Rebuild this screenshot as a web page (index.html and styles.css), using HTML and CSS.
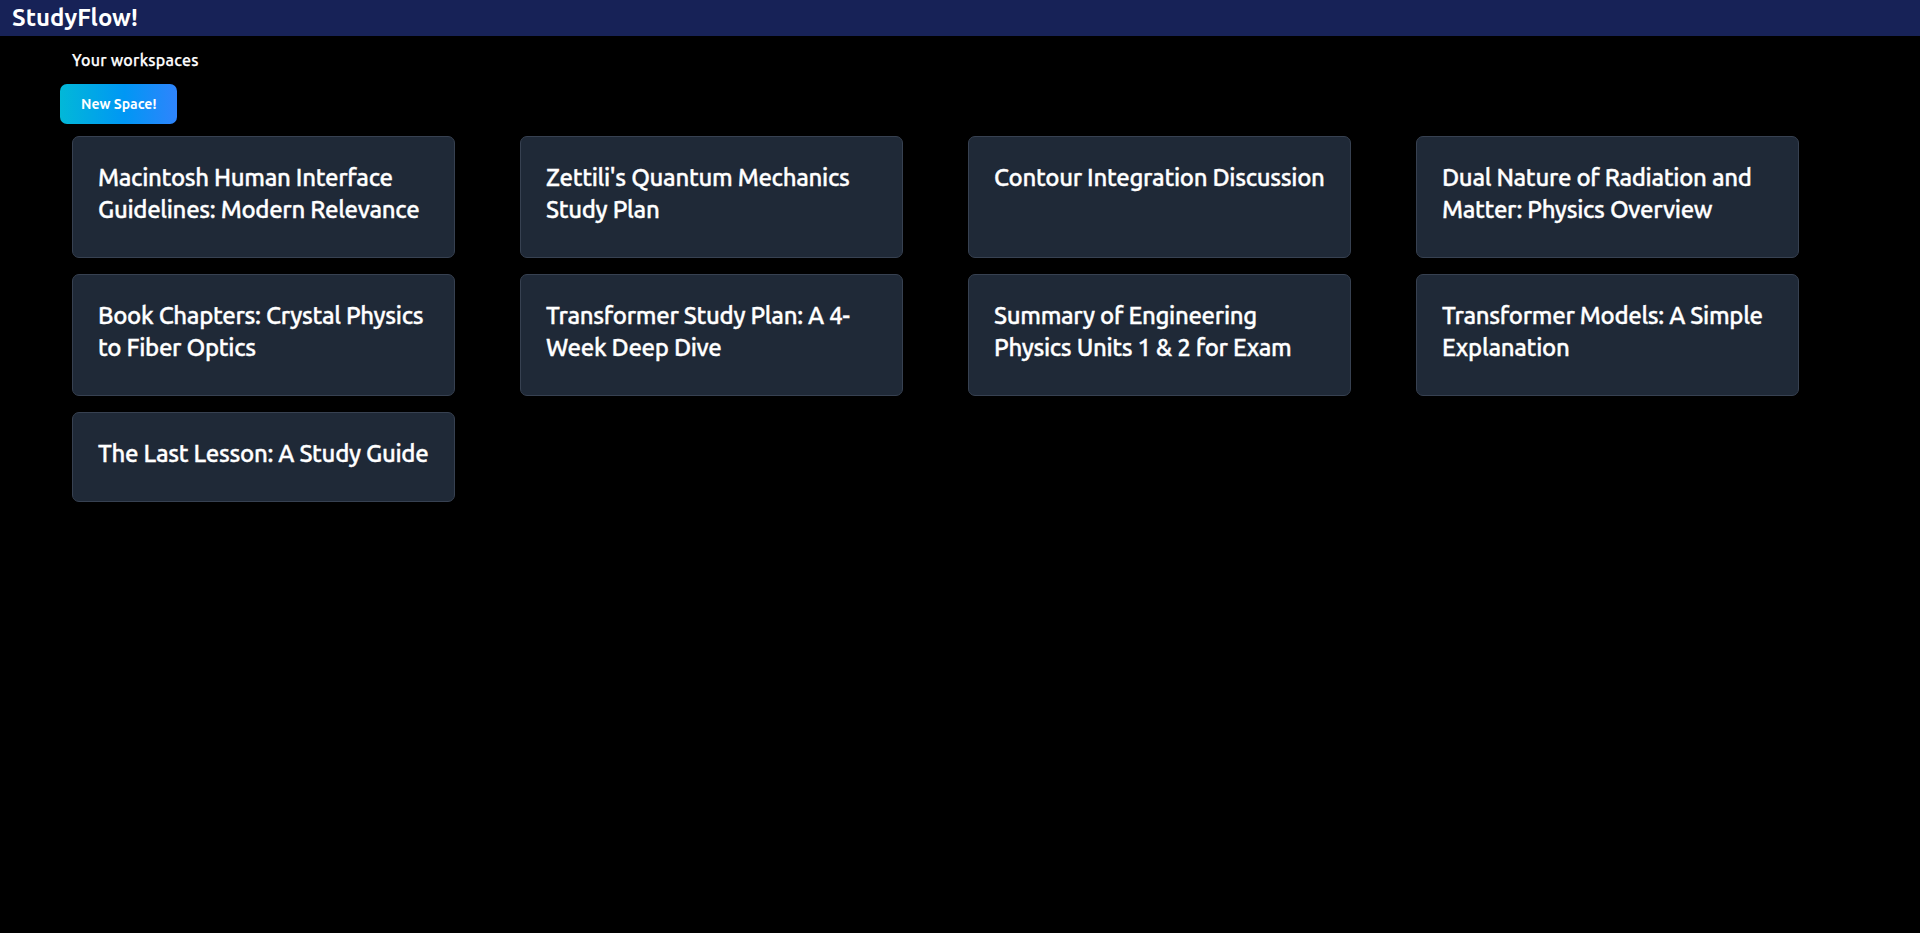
FILE: index.html
```html
<!DOCTYPE html>
<html lang="en">
<head>
<meta charset="utf-8">
<title>StudyFlow!</title>
<link rel="stylesheet" href="styles.css">
</head>
<body>
<header class="topbar">
  <h1 class="brand">StudyFlow!</h1>
</header>
<main class="workspace">
  <h2 class="section-title">Your workspaces</h2>
  <button class="new-space">New Space!</button>
  <div class="card-grid">
    <div class="card"><h3 class="card-title">Macintosh Human Interface Guidelines: Modern Relevance</h3></div>
    <div class="card"><h3 class="card-title">Zettili's Quantum Mechanics Study Plan</h3></div>
    <div class="card"><h3 class="card-title">Contour Integration Discussion</h3></div>
    <div class="card"><h3 class="card-title">Dual Nature of Radiation and Matter: Physics Overview</h3></div>
    <div class="card"><h3 class="card-title">Book Chapters: Crystal Physics to Fiber Optics</h3></div>
    <div class="card"><h3 class="card-title">Transformer Study Plan: A 4-Week Deep Dive</h3></div>
    <div class="card"><h3 class="card-title">Summary of Engineering Physics Units 1 &amp; 2 for Exam</h3></div>
    <div class="card"><h3 class="card-title">Transformer Models: A Simple Explanation</h3></div>
    <div class="card"><h3 class="card-title">The Last Lesson: A Study Guide</h3></div>
  </div>
</main>
</body>
</html>
```

FILE: styles.css
```css
* { box-sizing: border-box; }
html, body {
  margin: 0;
  padding: 0;
  background: #000;
  color: #fff;
  font-family: "Ubuntu", "Noto Sans", "Open Sans", sans-serif;
  min-height: 100%;
}
.topbar {
  background: #172257;
  height: 36px;
  padding: 0 12px;
  display: flex;
  align-items: center;
}
.brand {
  margin: 0;
  font-size: 24px;
  font-weight: 700;
  line-height: 32px;
}
.workspace {
  padding: 12px 0 0 60px;
}
.section-title {
  margin: 0 0 12px 12px;
  font-size: 16px;
  font-weight: 500;
  line-height: 24px;
  letter-spacing: 0.25px;
  -webkit-text-stroke: 0.25px #fff;
}
.new-space {
  display: block;
  height: 40px;
  padding: 0 21px;
  border: none;
  border-radius: 7px;
  background: linear-gradient(90deg, #02b8d8, #0097f4 55%, #2f84fc);
  color: #fff;
  font-family: inherit;
  font-size: 14px;
  font-weight: 700;
  cursor: pointer;
}
.card-grid {
  margin: 12px 0 0 12px;
  display: grid;
  grid-template-columns: repeat(4, 383px);
  column-gap: 65px;
  row-gap: 16px;
}
.card {
  background: #1f2937;
  border: 1px solid #374151;
  border-radius: 7px;
  padding: 25px 20px 24px 25px;
}
.card-title {
  margin: 0 0 7px;
  font-size: 24px;
  font-weight: 500;
  line-height: 32px;
  letter-spacing: -0.32px;
  -webkit-text-stroke: 0.35px #fff;
}
```
